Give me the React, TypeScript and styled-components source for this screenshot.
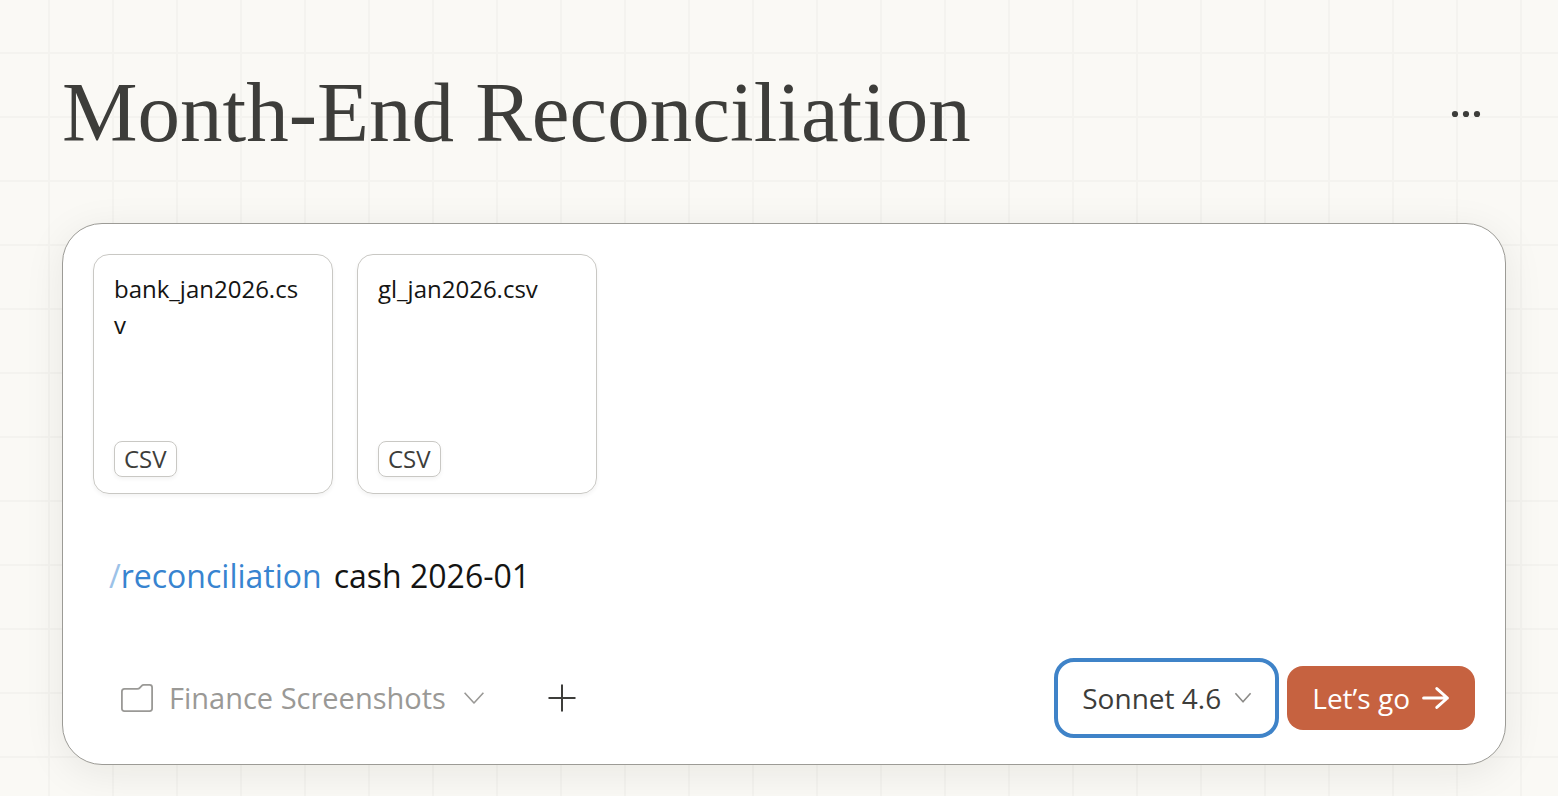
import React, { useState } from "react";
import styled, { createGlobalStyle } from "styled-components";

const GlobalStyle = createGlobalStyle`
  *, *::before, *::after { box-sizing: border-box; }
  body {
    margin: 0;
    min-height: 100vh;
    background-color: #faf9f5;
    background-image:
      linear-gradient(to right, #f4f3ef 2px, transparent 2px),
      linear-gradient(to bottom, #f4f3ef 2px, transparent 2px);
    background-size: 64px 64px;
    background-position: 48px 52px;
    font-family: "Open Sans", "Noto Sans", sans-serif;
    color: #141413;
  }
  button, input, select { font: inherit; color: inherit; }
`;

const Page = styled.main`
  padding: 0 52px 31px 62px;
`;

const Header = styled.header`
  display: flex;
  align-items: center;
  justify-content: space-between;
  padding: 64px 8px 59px 0;
`;

const Title = styled.h1`
  margin: 0;
  padding-bottom: 4px;
  font-family: "Liberation Serif", "Times New Roman", serif;
  font-size: 85px;
  font-weight: 400;
  line-height: 96px;
  color: #3d3d3a;
`;

const IconButton = styled.button`
  display: grid;
  place-items: center;
  width: 64px;
  height: 64px;
  padding: 0;
  border: 0;
  border-radius: 16px;
  background: transparent;
  color: #3d3d3a;
  cursor: pointer;
`;

const Composer = styled.form`
  display: flex;
  flex-direction: column;
  padding: 30px 30px 26px;
  border: 1px solid #9c9b96;
  border-radius: 40px;
  background: #ffffff;
  box-shadow: 0 8px 40px rgba(20, 20, 19, 0.08);
`;

const FileList = styled.ul`
  display: flex;
  flex-wrap: wrap;
  gap: 24px;
  margin: 0;
  padding: 0;
  list-style: none;
`;

const FileCard = styled.li`
  display: flex;
  flex-direction: column;
  justify-content: space-between;
  align-items: flex-start;
  width: 240px;
  height: 240px;
  padding: 16px 24px 16px 20px;
  border: 1px solid #c9c8c4;
  border-radius: 16px;
  box-shadow: 0 2px 4px rgba(20, 20, 19, 0.05);
`;

const FileName = styled.span`
  font-size: 24px;
  line-height: 36px;
  word-break: break-all;
`;

const FileType = styled.span`
  padding: 0 9px;
  border: 1px solid #c9c8c4;
  border-radius: 8px;
  box-shadow: 0 2px 4px rgba(20, 20, 19, 0.05);
  font-size: 24px;
  line-height: 34px;
  color: #3d3d3a;
`;

const Prompt = styled.label`
  display: flex;
  align-items: center;
  gap: 12px;
  margin: 58px 0;
  padding: 0 16px;
  font-size: 32px;
  line-height: 48px;
`;

const Command = styled.span`
  color: #3884d0;
`;

const Slash = styled.span`
  color: #9cc2e8;
`;

const PromptInput = styled.input`
  flex: 1;
  min-width: 0;
  height: 48px;
  padding: 0;
  border: 0;
  outline: 0;
  background: transparent;
`;

const Toolbar = styled.div`
  display: flex;
  align-items: center;
  gap: 8px;
`;

const FolderPicker = styled.label`
  display: flex;
  align-items: center;
  gap: 16px;
  padding: 0 28px;
  color: #9a9996;
`;

const SelectWrap = styled.span`
  display: flex;
  align-items: center;
`;

const SelectBox = styled.select<{ $boxed?: boolean }>`
  appearance: none;
  height: ${(p) => (p.$boxed ? 80 : 64)}px;
  padding: ${(p) => (p.$boxed ? "0 54px 0 24px" : "0 48px 0 0")};
  border: ${(p) => (p.$boxed ? "4px solid #3f83c8" : "0")};
  border-radius: 20px;
  outline: 0;
  background: transparent;
  font-size: ${(p) => (p.$boxed ? 28 : 29)}px;
  line-height: 40px;
  color: ${(p) => (p.$boxed ? "#3d3d3a" : "#9a9996")};
  cursor: pointer;
`;

const Chevron = styled.svg<{ $inset: number }>`
  flex: none;
  margin-left: -${(p) => p.$inset}px;
  margin-right: ${(p) => p.$inset - 20}px;
  pointer-events: none;
`;

const Spacer = styled.div`
  flex: 1;
`;

const SubmitButton = styled.button`
  display: flex;
  align-items: center;
  gap: 12px;
  height: 64px;
  padding: 0 25px;
  border: 0;
  border-radius: 16px;
  background: #c66240;
  color: #ffffff;
  font-size: 28px;
  line-height: 40px;
  cursor: pointer;
`;

const files = [
  { name: "bank_jan2026.csv", type: "CSV" },
  { name: "gl_jan2026.csv", type: "CSV" },
];

export default function App() {
  const [text, setText] = useState("cash 2026-01");

  return (
    <>
      <GlobalStyle />
      <Page>
        <Header>
          <Title>Month-End Reconciliation</Title>
          <IconButton type="button" aria-label="More options">
            <svg width="30" height="8" viewBox="0 0 30 8" fill="currentColor">
              <circle cx="4" cy="4" r="3.1" />
              <circle cx="15" cy="4" r="3.1" />
              <circle cx="26" cy="4" r="3.1" />
            </svg>
          </IconButton>
        </Header>

        <Composer onSubmit={(e) => e.preventDefault()}>
          <FileList>
            {files.map((file) => (
              <FileCard key={file.name}>
                <FileName>{file.name}</FileName>
                <FileType>{file.type}</FileType>
              </FileCard>
            ))}
          </FileList>

          <Prompt>
            <Command>
              <Slash>/</Slash>reconciliation
            </Command>
            <PromptInput
              aria-label="Command arguments"
              value={text}
              onChange={(e) => setText(e.target.value)}
            />
          </Prompt>

          <Toolbar>
            <FolderPicker>
              <svg width="32" height="28" viewBox="0 0 32 28" fill="none" stroke="currentColor" strokeWidth="1.8">
                <path d="M3.5 4.8H16.2C17.5 4.8 18.3 4.4 19 3.6L20.6 1.9C21.2 1.2 21.9 0.9 22.8 0.9H28.6C30.2 0.9 31.1 1.8 31.1 3.4V24.6C31.1 26.2 30.2 27.1 28.6 27.1H3.4C1.8 27.1 0.9 26.2 0.9 24.6V7.4C0.9 5.8 1.9 4.8 3.5 4.8Z" />
              </svg>
              <SelectWrap>
                <SelectBox aria-label="Project folder" defaultValue="finance">
                  <option value="finance">Finance Screenshots</option>
                </SelectBox>
                <Chevron $inset={30} width="20" height="12" viewBox="0 0 20 12" fill="none" stroke="currentColor" strokeWidth="1.6">
                  <path d="M0.6 0.7L10 11L19.4 0.7" strokeLinejoin="round" />
                </Chevron>
              </SelectWrap>
            </FolderPicker>
            <IconButton type="button" aria-label="Add attachment">
              <svg width="28" height="28" viewBox="0 0 28 28" stroke="currentColor" strokeWidth="2">
                <path d="M14 0.5V27.5M0.5 14H27.5" />
              </svg>
            </IconButton>
            <Spacer />
            <SelectWrap>
              <SelectBox $boxed aria-label="Model" defaultValue="sonnet">
                <option value="sonnet">Sonnet 4.6</option>
              </SelectBox>
              <Chevron $inset={46} width="20" height="12" viewBox="0 0 20 12" fill="none" stroke="#8c8b88" strokeWidth="1.6">
                <path d="M2.4 1.2L10 9.8L17.6 1.2" strokeLinejoin="round" />
              </Chevron>
            </SelectWrap>
            <SubmitButton type="submit">
              Let’s go
              <svg width="28" height="24" viewBox="0 0 28 24" fill="none" stroke="currentColor" strokeWidth="3" strokeLinecap="round" strokeLinejoin="round">
                <path d="M1.6 12H25.4M14.8 2.6L25.4 12L14.8 21.4" />
              </svg>
            </SubmitButton>
          </Toolbar>
        </Composer>
      </Page>
    </>
  );
}
